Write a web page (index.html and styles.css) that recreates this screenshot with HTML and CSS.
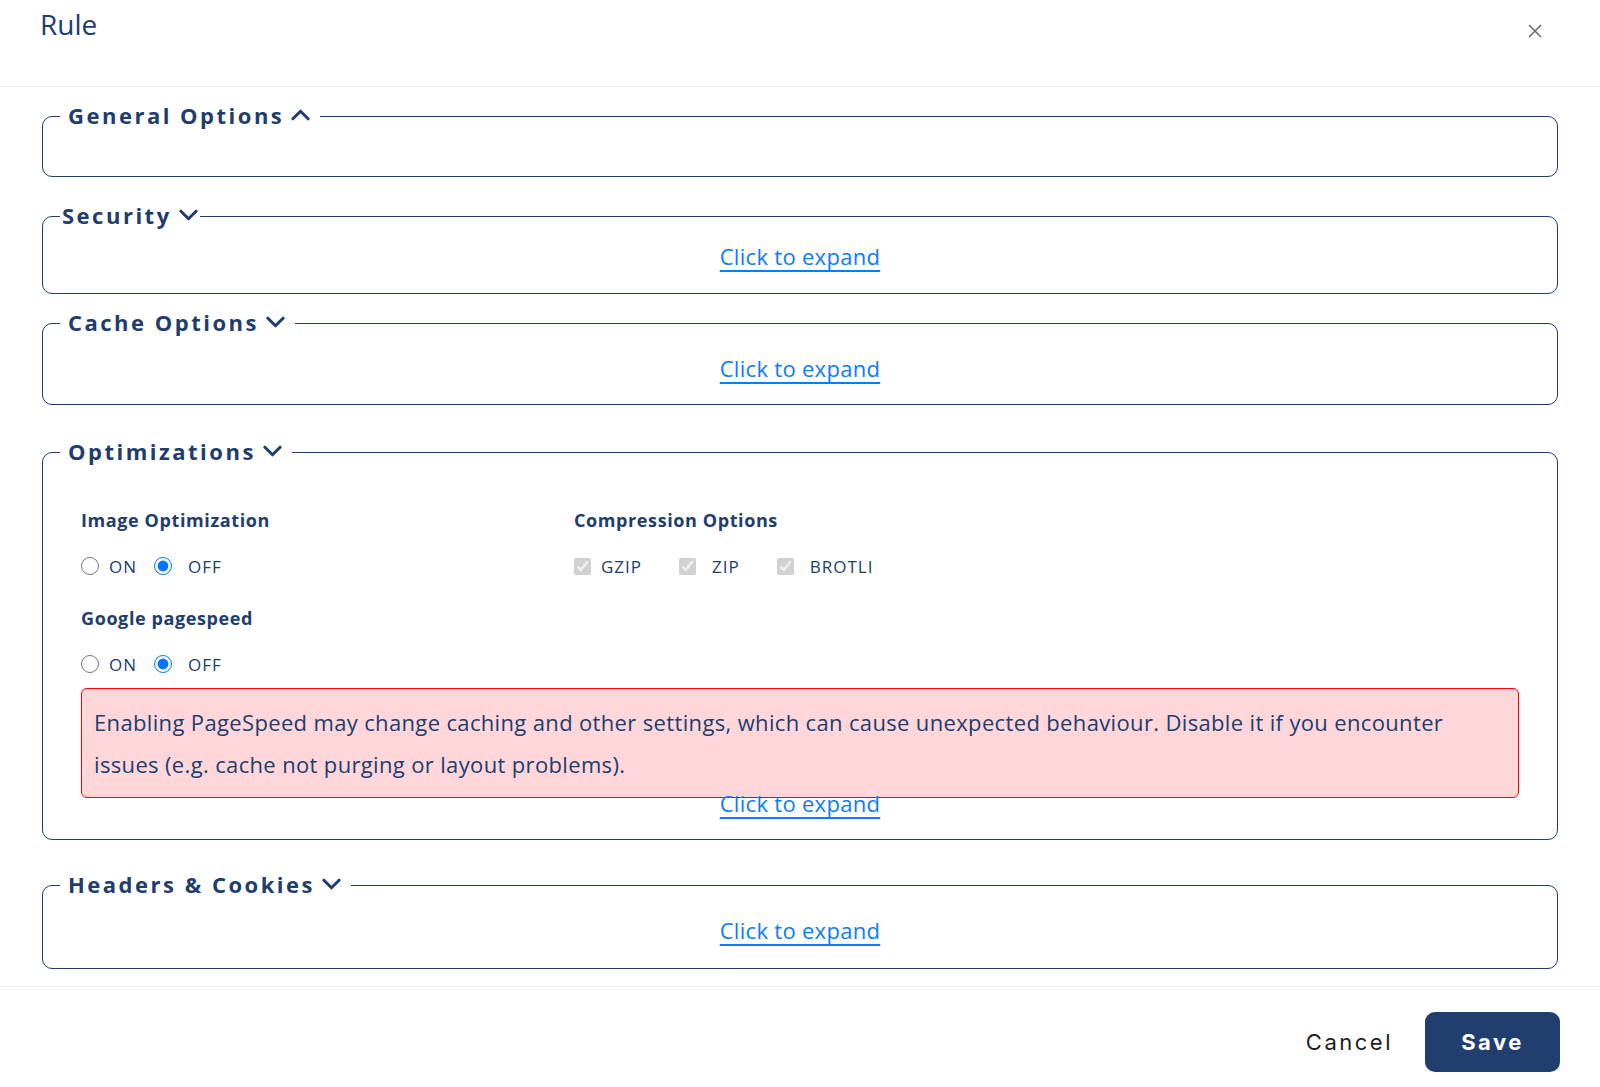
FILE: index.html
```html
<!DOCTYPE html>
<html lang="en">
<head>
    <meta charset="UTF-8">
    <meta name="viewport" content="width=device-width, initial-scale=1.0">
    <title>Rule</title>
    <link rel="stylesheet" href="styles.css">
</head>
<body>
    <div class="modal">
        <div class="modal-header">
            <h1 class="modal-title">Rule</h1>
            <button class="close" type="button" aria-label="Close">
                <svg width="14" height="14" viewBox="0 0 14 14"><path d="M1 1L13 13M13 1L1 13" stroke="#6b6b6b" stroke-width="1.6" fill="none"/></svg>
            </button>
        </div>

        <div class="modal-body">
            <fieldset class="group group-general">
                <legend class="group-title">General Options
                    <svg class="chevron" viewBox="0 0 20 12"><path d="M2 10L10 2L18 10" /></svg>
                </legend>
                <div class="group-empty"></div>
            </fieldset>

            <fieldset class="group group-security">
                <legend class="group-title tight">Security
                    <svg class="chevron" viewBox="0 0 20 12"><path d="M2 2L10 10L18 2" /></svg>
                </legend>
                <a href="#" class="expand">Click to expand</a>
            </fieldset>

            <fieldset class="group group-cache">
                <legend class="group-title">Cache Options
                    <svg class="chevron" viewBox="0 0 20 12"><path d="M2 2L10 10L18 2" /></svg>
                </legend>
                <a href="#" class="expand">Click to expand</a>
            </fieldset>

            <fieldset class="group group-opt">
                <legend class="group-title">Optimizations
                    <svg class="chevron" viewBox="0 0 20 12"><path d="M2 2L10 10L18 2" /></svg>
                </legend>
                <div class="opt-body">
                    <div class="opt-grid">
                        <div>
                            <div class="field-label">Image Optimization</div>
                            <div class="choices">
                                <label class="choice"><input type="radio" name="img"><span>ON</span></label>
                                <label class="choice wide"><input type="radio" name="img" checked><span>OFF</span></label>
                            </div>
                        </div>
                        <div>
                            <div class="field-label">Compression Options</div>
                            <div class="choices checks">
                                <label class="choice"><input type="checkbox" checked disabled><span>GZIP</span></label>
                                <label class="choice wide"><input type="checkbox" checked disabled><span>ZIP</span></label>
                                <label class="choice wide"><input type="checkbox" checked disabled><span>BROTLI</span></label>
                            </div>
                        </div>
                    </div>
                    <div class="field-label second">Google pagespeed</div>
                    <div class="choices">
                        <label class="choice"><input type="radio" name="ps"><span>ON</span></label>
                        <label class="choice wide"><input type="radio" name="ps" checked><span>OFF</span></label>
                    </div>
                    <div class="alert">Enabling PageSpeed may change caching and other settings, which can cause unexpected behaviour. Disable it if you encounter issues (e.g. cache not purging or layout problems).</div>
                </div>
                <a href="#" class="expand">Click to expand</a>
            </fieldset>

            <fieldset class="group group-headers">
                <legend class="group-title">Headers &amp; Cookies
                    <svg class="chevron" viewBox="0 0 20 12"><path d="M2 2L10 10L18 2" /></svg>
                </legend>
                <a href="#" class="expand">Click to expand</a>
            </fieldset>
        </div>

        <div class="modal-footer">
            <button type="button" class="btn-cancel">Cancel</button>
            <button type="button" class="btn-save">Save</button>
        </div>
    </div>
</body>
</html>
```

FILE: styles.css
```css
body {
    margin: 0;
    font-family: "Open Sans", Roboto, sans-serif;
    color: #203d6e;
    background-color: #fff;
}
.modal {
    display: flex;
    flex-direction: column;
    height: 1087px;
}
.modal-header {
    display: flex;
    justify-content: space-between;
    align-items: flex-start;
    padding: 7px 58px 0 40px;
    border-bottom: 1px solid #ebeef1;
    box-sizing: border-box;
    height: 87px;
}
.modal-title {
    margin: 0;
    font-size: 28px;
    font-weight: 400;
    line-height: 34px;
    color: #203d6e;
}
.close {
    background: none;
    border: none;
    padding: 0;
    margin-top: 17px;
    width: 14px;
    height: 14px;
    cursor: pointer;
}
.close svg {
    display: block;
}
.modal-body {
    flex: 1;
    padding: 15px 42px 0;
}
.group {
    margin: 0;
    padding: 0;
    min-width: 0;
    border: 1.5px solid #203d6e;
    border-radius: 10px;
}
.group-title {
    display: flex;
    align-items: center;
    box-sizing: border-box;
    margin-left: 17px;
    padding: 0 10px 3px 8px;
    height: 28px;
    font-size: 22px;
    font-weight: 700;
    line-height: 24px;
    letter-spacing: 2.5px;
    color: #203d6e;
}
.group-title.tight {
    padding: 0 2px 3px;
}
.chevron {
    width: 19px;
    height: 12px;
    margin-left: 7px;
    fill: none;
    stroke: #203d6e;
    stroke-width: 3.2;
    stroke-linecap: round;
    stroke-linejoin: round;
}
.group-empty {
    height: 46px;
}
.expand {
    display: block;
    width: max-content;
    margin: 0 auto;
    font-size: 22px;
    line-height: 26px;
    letter-spacing: 0.3px;
    color: #0b7bff;
    text-decoration: underline;
    text-underline-offset: 5px;
    text-decoration-thickness: 1.5px;
}
.group-security {
    margin-top: 25px;
}
.group-security .expand {
    margin-top: 13px;
    margin-bottom: 24px;
}
.group-cache {
    margin-top: 15px;
}
.group-cache .expand {
    margin-top: 18px;
    margin-bottom: 23px;
}
.group-opt {
    margin-top: 33px;
}
.group-opt .expand {
    margin-bottom: 23px;
}
.group-headers {
    margin-top: 31px;
}
.group-headers .expand {
    margin-top: 18px;
    margin-bottom: 25px;
}
.opt-body {
    padding: 42px 38px 0;
}
.opt-grid {
    display: grid;
    grid-template-columns: 493px 1fr;
}
.field-label {
    font-size: 18px;
    font-weight: 700;
    line-height: 24px;
    letter-spacing: 0.6px;
}
.field-label.second {
    margin-top: 28px;
}
.choices {
    display: flex;
    align-items: center;
    margin-top: 22px;
    height: 24px;
}
.choice {
    display: flex;
    align-items: center;
    gap: 10px;
    font-size: 17px;
    letter-spacing: 1px;
    margin-right: 17px;
}
.choice.wide {
    gap: 16px;
}
.checks .choice {
    margin-right: 37px;
}
.choice input {
    width: 18px;
    height: 18px;
    margin: 0;
}
.checks .choice input {
    width: 17px;
    height: 17px;
}
.alert {
    margin-top: 12px;
    margin-bottom: -8px;
    padding: 12px;
    border: 1px solid #ff0000;
    border-radius: 6px;
    background-color: #ffd7da;
    font-size: 22px;
    line-height: 42px;
    letter-spacing: 0.35px;
}
.modal-footer {
    display: flex;
    justify-content: flex-end;
    align-items: center;
    gap: 32px;
    padding: 25px 40px 15px;
    border-top: 1px solid #ebeef1;
}
.btn-cancel {
    background: none;
    border: none;
    padding: 0;
    font-family: Inter, "Liberation Sans", sans-serif;
    font-size: 22px;
    letter-spacing: 2.5px;
    color: #1e1e1e;
    cursor: pointer;
}
.btn-save {
    width: 135px;
    height: 60px;
    border: none;
    border-radius: 10px;
    background-color: #213f6e;
    color: #fff;
    font-family: Inter, "Liberation Sans", sans-serif;
    font-size: 22px;
    font-weight: 700;
    letter-spacing: 2.5px;
    cursor: pointer;
}
```
